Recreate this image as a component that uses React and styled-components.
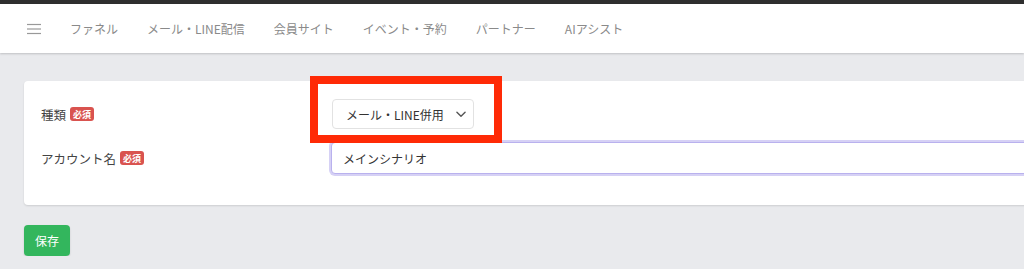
import React from 'react';
import styled, { createGlobalStyle } from 'styled-components';

const GlobalStyle = createGlobalStyle`
  html, body {
    margin: 0;
    padding: 0;
    background: #e9eaed;
    font-family: "Noto Sans CJK JP", "Noto Sans", sans-serif;
    overflow: hidden;
  }
`;

const TopStrip = styled.div`
  height: 4px;
  background: #2e2e2e;
`;

const NavBar = styled.nav`
  height: 49px;
  background: #ffffff;
  display: flex;
  align-items: center;
  padding-left: 27px;
  box-shadow: 0 1px 2px rgba(0, 0, 0, 0.18);
  position: relative;
`;

const MenuButton = styled.span`
  display: flex;
  width: 14px;
  margin-right: 29px;
  color: #999;
`;

const NavItem = styled.span`
  font-size: 12px;
  color: #8a8a8a;
  margin-right: 29px;
  line-height: 1;
  white-space: nowrap;
`;

const Main = styled.main`
  padding: 28px 0 0 24px;
  overflow: hidden;
`;

const Card = styled.section`
  width: 1100px;
  background: #ffffff;
  border-radius: 4px;
  box-shadow: 0 1px 2px rgba(0, 0, 0, 0.12);
  padding: 18px 17px 31px;
  display: flex;
  flex-direction: column;
  gap: 13px;
`;

const Row = styled.div`
  display: flex;
  align-items: center;
`;

const Label = styled.div`
  width: 291px;
  flex-shrink: 0;
  display: flex;
  align-items: center;
  gap: 4px;
  font-size: 12.5px;
  color: #444;
`;

const Badge = styled.span`
  display: inline-flex;
  align-items: center;
  justify-content: center;
  height: 14px;
  padding: 0 3px;
  border-radius: 3px;
  background: #d9534f;
  color: #fff;
  font-size: 9px;
  font-weight: 700;
  line-height: 1;
`;

const SelectWrap = styled.div`
  position: relative;
`;

const Select = styled.div`
  width: 142px;
  height: 30px;
  box-sizing: border-box;
  border: 1px solid #e2e2e2;
  border-radius: 4px;
  display: flex;
  align-items: center;
  justify-content: space-between;
  padding: 0 5px 0 13px;
  font-size: 12px;
  color: #333;
  background: #fff;
`;

const Highlight = styled.div`
  position: absolute;
  top: -23px;
  left: -22px;
  right: -28px;
  bottom: -14px;
  border: 8px solid #ff2a06;
  pointer-events: none;
`;

const Input = styled.input`
  width: 760px;
  height: 32px;
  box-sizing: border-box;
  margin-left: -1px;
  border: 1px solid #b9b1ee;
  border-radius: 4px;
  box-shadow: 0 0 0 2px #d6d1f5;
  padding: 0 11px;
  font-family: inherit;
  font-size: 12px;
  color: #333;
  outline: none;
`;

const SaveButton = styled.button`
  margin-top: 20px;
  width: 46px;
  height: 31px;
  border: none;
  border-radius: 4px;
  background: #33b65d;
  color: #fff;
  font-family: inherit;
  font-size: 12px;
  box-shadow: 0 1px 2px rgba(0, 0, 0, 0.15);
  padding: 0;
`;

const navItems = ['ファネル', 'メール・LINE配信', '会員サイト', 'イベント・予約', 'パートナー', 'AIアシスト'];

const App = () => {
  return (
    <>
      <GlobalStyle />
      <TopStrip />
      <NavBar>
        <MenuButton>
          <svg width="14" height="12" viewBox="0 0 14 12" fill="none" stroke="currentColor" strokeWidth="1.2">
            <line x1="0" y1="1.5" x2="14" y2="1.5" />
            <line x1="0" y1="6" x2="14" y2="6" />
            <line x1="0" y1="10.5" x2="14" y2="10.5" />
          </svg>
        </MenuButton>
        {navItems.map((item) => (
          <NavItem key={item}>{item}</NavItem>
        ))}
      </NavBar>
      <Main>
        <Card>
          <Row>
            <Label>種類<Badge>必須</Badge></Label>
            <SelectWrap>
              <Select>
                メール・LINE併用
                <svg width="14" height="14" viewBox="0 0 24 24" fill="none" stroke="#555" strokeWidth="2.4" strokeLinecap="round" strokeLinejoin="round">
                  <polyline points="5 9 12 16 19 9" />
                </svg>
              </Select>
              <Highlight />
            </SelectWrap>
          </Row>
          <Row>
            <Label>アカウント名<Badge>必須</Badge></Label>
            <Input defaultValue="メインシナリオ" />
          </Row>
        </Card>
        <SaveButton>保存</SaveButton>
      </Main>
    </>
  );
};

export default App;
